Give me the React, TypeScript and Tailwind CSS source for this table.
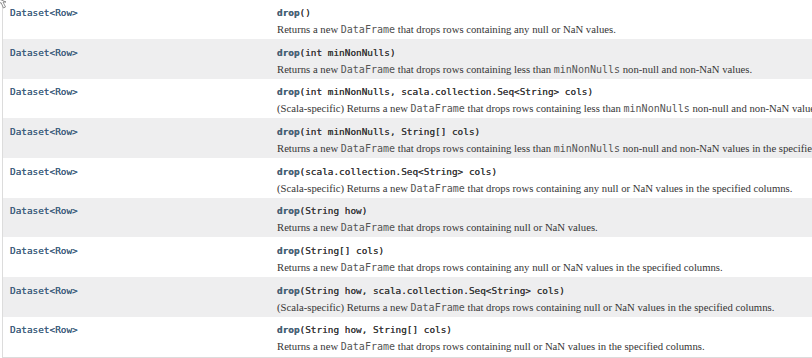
import React from 'react';

type Method = {
  args: string;
  desc: React.ReactNode;
};

const Code = ({ children }: { children: React.ReactNode }) => (
  <span className="font-['DejaVu_Sans_Mono',monospace] text-[10px] text-[#555555]">{children}</span>
);

const DF = <Code>DataFrame</Code>;
const MNN = <Code>minNonNulls</Code>;

const methods: Method[] = [
  { args: '()', desc: <>Returns a new {DF} that drops rows containing any null or NaN values.</> },
  { args: '(int minNonNulls)', desc: <>Returns a new {DF} that drops rows containing less than {MNN} non-null and non-NaN values.</> },
  { args: '(int minNonNulls, scala.collection.Seq<String> cols)', desc: <>(Scala-specific) Returns a new {DF} that drops rows containing less than {MNN} non-null and non-NaN values in the specified columns.</> },
  { args: '(int minNonNulls, String[] cols)', desc: <>Returns a new {DF} that drops rows containing less than {MNN} non-null and non-NaN values in the specified columns.</> },
  { args: '(scala.collection.Seq<String> cols)', desc: <>(Scala-specific) Returns a new {DF} that drops rows containing any null or NaN values in the specified columns.</> },
  { args: '(String how)', desc: <>Returns a new {DF} that drops rows containing null or NaN values.</> },
  { args: '(String[] cols)', desc: <>Returns a new {DF} that drops rows containing any null or NaN values in the specified columns.</> },
  { args: '(String how, scala.collection.Seq<String> cols)', desc: <>(Scala-specific) Returns a new {DF} that drops rows containing null or NaN values in the specified columns.</> },
  { args: '(String how, String[] cols)', desc: <>Returns a new {DF} that drops rows containing null or NaN values in the specified columns.</> },
];

export default function App() {
  return (
    <div className="relative h-[358px] w-[812px] overflow-hidden bg-white">
      <div className="ml-[2px] w-[1000px] border-b border-l border-[#dcdcdc]">
        {methods.map((m, i) => (
          <div
            key={i}
            className={`flex whitespace-nowrap ${i === 0 ? 'h-[39px] pt-[7px]' : 'h-[39.7px] pt-[7.5px]'} ${i % 2 === 1 ? 'bg-[#eeeeef]' : 'bg-white'}`}
          >
            <div className="w-[274px] pl-[7px] font-['DejaVu_Sans_Mono',monospace] text-[9.4px] leading-[12px] text-[#3f5f7e] [text-shadow:0_0_0.3px_#3f5f7e]">
              Dataset&lt;Row&gt;
            </div>
            <div className="flex flex-col gap-[4px]">
              <div className="font-['DejaVu_Sans_Mono',monospace] text-[9.4px] leading-[12px] text-[#3a3a3a] [text-shadow:0_0_0.3px_#3a3a3a]">
                <span className="font-bold text-[#4a6782]">drop</span>
                {m.args}
              </div>
              <div className="font-['Liberation_Serif',serif] text-[10.7px] leading-[12px] text-[#353535]">{m.desc}</div>
            </div>
          </div>
        ))}
      </div>
      <svg className="absolute left-0 top-0" width="10" height="12" viewBox="0 0 10 12">
        <path d="M0 0 L0 5 L2 3.5 L4.5 9 L6.5 8 L4 3 L7 3 Z" fill="#fff" stroke="#777" strokeWidth="0.8" transform="translate(-1,-1)" />
      </svg>
    </div>
  );
}
